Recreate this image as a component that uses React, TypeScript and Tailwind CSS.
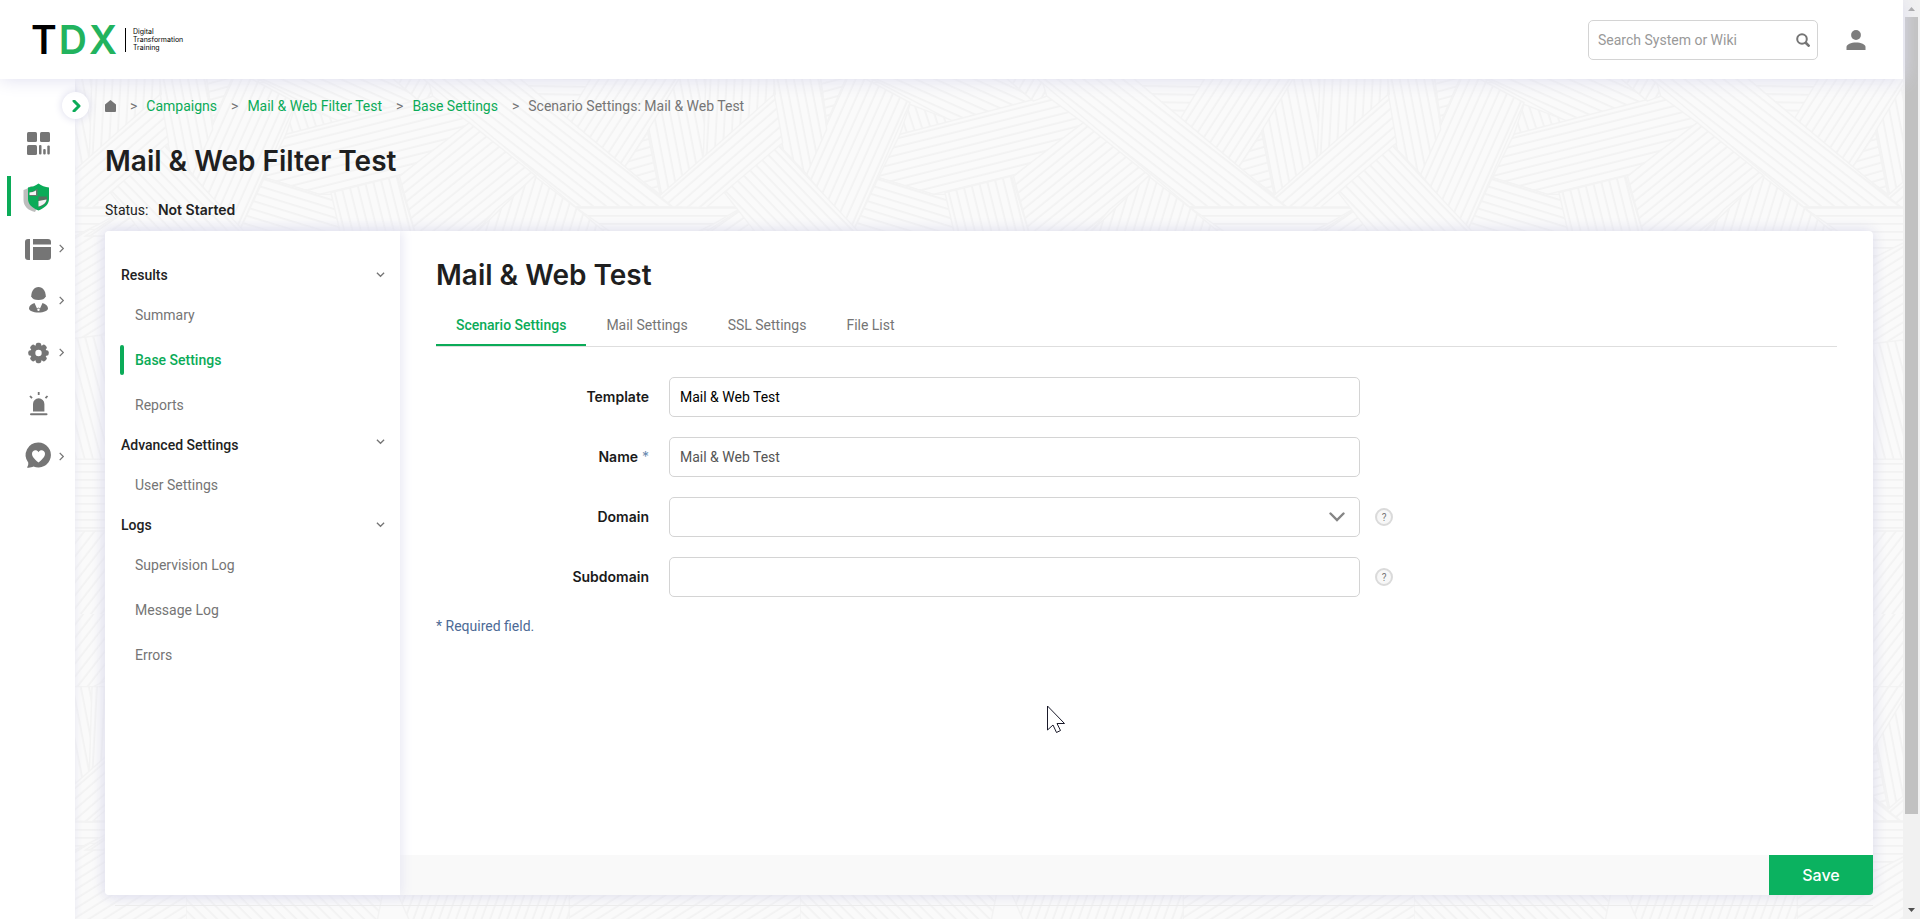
import React from "react";

type Region = { points: string; angle: number };

const REGIONS: Region[] = [
  { points: "0,460 620,460 560,760 0,760", angle: 45 },
  { points: "560,440 1200,440 1200,760 700,760", angle: 110 },
  { points: "1150,460 1900,460 1900,770 1150,830", angle: 148 },
  { points: "1150,830 1900,740 1900,1150 1150,1150", angle: 75 },
  { points: "0,1150 1842,1150 1842,1370 0,1370", angle: 0 },
  { points: "0,1365 1842,1365 1842,1800 0,1800", angle: 128 },
  { points: "0,-230 1842,-230 1842,-140 1500,20 0,20", angle: 128 },
  { points: "1168,393 1670,393 1590,440 1350,560 1270,465", angle: 0 },
  { points: "1675,393 1730,480 1540,480", angle: 145 },
  { points: "1615,350 1768,200 2020,470 1950,560 1780,560", angle: 46 },
  { points: "1757,-10 1902,-10 1922,160 1862,295 1772,200", angle: 79 },
  { points: "1902,-10 1987,-10 1922,140", angle: 165 },
  { points: "140,-10 180,0 330,80 160,465 20,295", angle: 114 },
  { points: "180,-10 600,-10 700,75 455,135", angle: 24 },
  { points: "330,85 460,135 300,175", angle: 72 },
  { points: "300,175 740,60 850,140 670,290 400,355 235,305", angle: 166 },
  { points: "600,-10 720,-10 740,60 700,75", angle: 120 },
  { points: "235,305 400,355 440,355 465,480 160,465", angle: 17 },
  { points: "435,350 635,300 690,480 465,480", angle: 76 },
  { points: "850,140 1050,300 930,400 860,480 690,480 640,300", angle: 141 },
  { points: "1045,300 1170,395 1270,480 860,480", angle: 107 },
  { points: "980,-10 1225,-10 1145,130", angle: 1 },
  { points: "1225,-10 1500,-10 1315,275 1140,130", angle: 123 },
  { points: "1385,165 1490,-10 1565,-10 1555,245 1422,360", angle: 79 },
  { points: "1315,275 1385,170 1422,355", angle: 164 },
  { points: "1560,-10 1762,-10 1768,55 1552,248", angle: 93 },
  { points: "690,-10 980,-10 1460,392 1168,392", angle: 38 },
  { points: "1420,360 1765,55 1790,200 1560,395 1460,392", angle: 139 },
];

const ANGLES = Array.from(new Set(REGIONS.map((r) => r.angle)));

function Backdrop() {
  return (
    <svg aria-hidden="true" className="absolute inset-0 h-full w-full">
      <defs>
        {ANGLES.map((a) => (
          <pattern
            key={a}
            id={`stripe-${a}`}
            width="24"
            height="24"
            patternUnits="userSpaceOnUse"
            patternTransform={`rotate(${a})`}
          >
            <rect width="24" height="24" fill="#fafafa" />
            <rect y="9" width="24" height="5" fill="#f2f2f2" />
          </pattern>
        ))}
        <pattern
          id="weave"
          width="614"
          height="614"
          patternUnits="userSpaceOnUse"
          patternTransform="translate(111 -79)"
        >
          <rect width="614" height="614" fill="#fafafa" />
          {[0, -1842].map((dx) => (
            <g key={dx} transform={`translate(0 76) scale(0.33333) translate(${dx} 0)`}>
              {REGIONS.map((r, i) => (
                <polygon
                  key={i}
                  points={r.points}
                  fill={`url(#stripe-${r.angle})`}
                  stroke="#f3f3f3"
                  strokeWidth="4"
                  visibility={dx === 0 || (i >= 9 && i <= 11) ? "visible" : "hidden"}
                />
              ))}
            </g>
          ))}
        </pattern>
      </defs>
      <rect width="100%" height="100%" fill="url(#weave)" />
    </svg>
  );
}

function Chevron({ className }: { className: string }) {
  return (
    <svg aria-hidden="true" viewBox="0 0 10 10" className={className} fill="none" stroke="currentColor" strokeWidth="1.4">
      <path d="M1 3l4 4 4-4" />
    </svg>
  );
}

function Logo() {
  return (
    <a href="#home" className="flex items-center font-['Inter',sans-serif]">
      <span className="flex gap-[2px] text-[39px] leading-10 font-semibold text-black">
        <span>T</span>
        <span className="text-[#22b35e]">D</span>
        <span className="text-[#22b35e]">X</span>
      </span>
      <span className="ml-2 border-l border-black pl-[7px] text-[7px] leading-[8px] text-black">
        Digital
        <br />
        Transformation
        <br />
        Training
      </span>
    </a>
  );
}

function Header() {
  return (
    <header className="relative z-20 flex h-[79px] shrink-0 items-center justify-between bg-white pr-[37px] pl-[31px] shadow-[0_0_18px_#dcdcee]">
      <Logo />
      <div className="flex items-center gap-[28px]">
        <form className="flex h-10 w-[230px] items-center rounded-[5px] border border-[#d4d4d4] bg-white pr-[7px] pl-[9px]">
          <input
            type="text"
            aria-label="Search System or Wiki"
            placeholder="Search System or Wiki"
            className="min-w-0 flex-1 bg-transparent text-sm outline-none placeholder:text-[#999]"
          />
          <button type="button" aria-label="Search">
            <svg viewBox="0 0 14 14" className="h-[14px] w-[14px]" fill="none" stroke="#757575" strokeWidth="2">
              <circle cx="6" cy="6" r="4.8" />
              <path d="M9.5 9.5l4 4" strokeWidth="2.6" />
            </svg>
          </button>
        </form>
        <button type="button" aria-label="Account">
          <svg viewBox="0 0 20 20" className="h-5 w-5" fill="#7d7d7d">
            <circle cx="10" cy="5" r="4.9" />
            <path d="M0.5 20v-3c0-2.8 4.5-4.6 9.500-4.600s9.500 1.800 9.500 4.600v3z" />
          </svg>
        </button>
      </div>
    </header>
  );
}

const ICONS: Record<string, React.ReactNode> = {
  Dashboard: (
    <g>
      <rect x="2" y="1" width="10" height="10" rx="1.500" />
      <rect x="15" y="1" width="10" height="10" rx="1.500" />
      <rect x="2" y="14" width="10" height="10" rx="1.500" />
      <rect x="14" y="14" width="2.500" height="9.500" rx="1" />
      <rect x="18.200" y="18" width="2.500" height="5.500" rx="1" />
      <rect x="22.300" y="14.500" width="2.500" height="9" rx="1" />
    </g>
  ),
  Campaigns: (
    <g>
      <path d="M-1.500 7Q2 6 6 3L14 6v15l-4 8c-7-1.500-11.500-6-11.500-12z" fill="#bdbdbd" />
      <path d="M3 4.500Q9 4 13.500 0.500Q18 4 24 4.500V16c0 5-4 9-10.500 11.500C7 25 3 21 3 16z" fill="#0bab58" />
      <path d="M4.500 9.500Q9 9 12.500 5.500V13H4.500z" fill="#67786d" />
      <path d="M4.500 9.500Q8 9.500 11 7.500L11 12L4.500 12z" fill="#f4f4f4" />
      <path d="M13.500 13.500H22V16c0 3.500-3 7-8.500 8.500z" fill="#57705f" />
      <path d="M13.500 18l8-1.500c-.3 3.500-3 5.500-8 7z" fill="#f4f4f4" />
    </g>
  ),
  Content: (
    <g>
      <path d="M3 4h2v21H3a3 3 0 0 1-3-3V7a3 3 0 0 1 3-3z" />
      <path d="M8 4h15a3 3 0 0 1 3 3v2.500H8z" />
      <path d="M8 12h18v10a3 3 0 0 1-3 3H8z" />
    </g>
  ),
  Users: (
    <g>
      <path d="M13.500 0c4.500 0 7 4 7.300 9.200-1 2.800-3.500 3.800-7.300 3.800s-6.300-1-7.300-3.800C6.500 4 9 0 13.500 0z" />
      <path d="M9.500 16l2.500 5.500 1.500-1 1.500 1 2.500-5.500c3.500 1 5.500 3 5.500 5.500 0 2.200-4 4-9.500 4s-9.500-1.800-9.500-4c0-2.500 2-4.500 5.500-5.500z" />
      <circle cx="13.500" cy="22.800" r="1.200" fill="#fff" />
    </g>
  ),
  Settings: (
    <g>
      {[0, 45, 90, 135].map((a) => (
        <rect key={a} x="10.800" y="3.800" width="5.400" height="20.400" rx="2" transform={`rotate(${a} 13.500 14)`} />
      ))}
      <circle cx="13.500" cy="14" r="8" />
      <circle cx="13.500" cy="14" r="3.200" fill="#fff" />
    </g>
  ),
  Alerts: (
    <g>
      <path d="M8 20.500v-7.500a5.700 5.700 0 0 1 11.400 0v7.500z" />
      <rect x="5" y="22.300" width="17.500" height="2" rx="1" />
      <path d="M13.700 1v3M5 5l2 2.200M22.500 5l-2 2.200" stroke="#757575" strokeWidth="1.800" />
    </g>
  ),
  Feedback: (
    <g transform="translate(0 -1)">
      <path d="M13.500 0.500a12.500 12.500 0 1 1-5 24c-2 1-4.500 1.500-6.500 1 1-1.500 1.500-3 1.200-5A12.500 12.500 0 0 1 13.500 0.500z" />
      <path d="M13.500 20.500C9 17 7 14.500 7 11.800c0-3.800 4.800-4.800 6.500-1.500 1.700-3.300 6.500-2.300 6.500 1.500 0 2.700-2 5.200-6.500 8.700z" fill="#fff" />
    </g>
  ),
};

const NAV = [
  { name: "Dashboard", more: false },
  { name: "Campaigns", more: false },
  { name: "Content", more: true },
  { name: "Users", more: true },
  { name: "Settings", more: true },
  { name: "Alerts", more: false },
  { name: "Feedback", more: true },
];

function Sidebar() {
  return (
    <aside className="relative z-10 w-[75px] shrink-0 bg-white pt-[39px] shadow-[0_0_8px_#e6e6f2]">
      <button
        type="button"
        aria-label="Expand menu"
        className="absolute top-[13px] -right-[14px] flex h-[27px] w-[27px] items-center justify-center rounded-full bg-white text-[#0bab58] shadow-[0_0_8px_#d8d8ea]"
      >
        <svg viewBox="0 0 12 12" className="ml-[2px] h-3 w-3" fill="none" stroke="currentColor" strokeWidth="3">
          <path d="M3 1l5 5-5 5" strokeLinecap="round" strokeLinejoin="round" />
        </svg>
      </button>
      <nav>
        {NAV.map((n) => (
          <a
            key={n.name}
            href={`#${n.name.toLowerCase()}`}
            aria-label={n.name}
            className="flex h-[52px] items-center pl-[7px] text-[#757575]"
          >
            <span className={n.name === "Campaigns" ? "h-10 w-1 bg-[#0bab58]" : "h-10 w-1"} />
            <svg viewBox="0 0 27 27" className="ml-[14px] h-[27px] w-[27px] overflow-visible" fill="currentColor">
              {ICONS[n.name]}
            </svg>
            {n.more && <Chevron className="ml-[5px] h-[9px] w-[9px] -rotate-90" />}
          </a>
        ))}
      </nav>
    </aside>
  );
}

const CRUMBS = ["Campaigns", "Mail & Web Filter Test", "Base Settings"];

function Breadcrumbs() {
  return (
    <nav aria-label="Breadcrumb" className="flex h-5 items-center text-sm text-[#757575]">
      <a href="#home" aria-label="Home">
        <svg viewBox="0 0 11 12" className="h-3 w-[11px]" fill="currentColor">
          <path d="M5.500 0L11 4.500V11a1 1 0 0 1-1 1H1a1 1 0 0 1-1-1V4.500z" />
        </svg>
      </a>
      {CRUMBS.map((c) => (
        <React.Fragment key={c}>
          <span className="mr-[9px] ml-[14px]">&gt;</span>
          <a href="#crumb" className="text-[#0bab58]">{c}</a>
        </React.Fragment>
      ))}
      <span className="mr-[9px] ml-[14px]">&gt;</span>
      <span>Scenario Settings: Mail &amp; Web Test</span>
    </nav>
  );
}

const MENU = [
  { title: "Results", items: ["Summary", "Base Settings", "Reports"] },
  { title: "Advanced Settings", items: ["User Settings"] },
  { title: "Logs", items: ["Supervision Log", "Message Log", "Errors"] },
];

function SideMenu() {
  return (
    <nav aria-label="Campaign" className="relative z-10 w-[295px] shrink-0 rounded-l bg-white pt-[26px] text-sm shadow-[2px_0_12px_#e6e6f2]">
      {MENU.map((g) => (
        <section key={g.title}>
          <button type="button" className="flex h-[35px] w-full items-center justify-between pr-[15px] pl-4 font-medium text-[#222]">
            {g.title}
            <Chevron className={g.title === "Advanced Settings" ? "mb-[6px] h-[9px] w-[9px] text-[#757575]" : "h-[9px] w-[9px] text-[#757575]"} />
          </button>
          {g.items.map((i) => (
            <a
              key={i}
              href="#item"
              className={
                i === "Base Settings"
                  ? "flex h-[45px] items-center pl-[15px] font-medium text-[#0bab58]"
                  : "flex h-[45px] items-center pl-[15px] text-[#757575]"
              }
            >
              <span className={i === "Base Settings" ? "mr-[11px] h-[30px] w-1 rounded-sm bg-[#0bab58]" : "mr-[11px] w-1"} />
              {i}
            </a>
          ))}
        </section>
      ))}
    </nav>
  );
}

const TABS = ["Scenario Settings", "Mail Settings", "SSL Settings", "File List"];

const CONTROL = "h-10 w-full appearance-none rounded-[5px] border border-[#d4d4d4] bg-white px-[10px] text-sm outline-none";

function Row({ id, label, required, help, children }: { id: string; label: string; required?: boolean; help?: boolean; children: React.ReactNode }) {
  return (
    <div className="grid grid-cols-[213px_minmax(0,691px)_auto] items-center">
      <label htmlFor={id} className="text-right font-['Inter',sans-serif] text-sm font-semibold text-[#1a1a1a]">
        {label}
        {required && <span className="font-normal text-[#6a8ab0]"> *</span>}
      </label>
      <div className="relative ml-5 -mr-5">{children}</div>
      {help && (
        <button
          type="button"
          aria-label={`Help for ${label}`}
          className="ml-[35px] flex h-[18px] w-[18px] items-center justify-center rounded-full border-2 border-[#dadada] bg-[#f7f7f7] text-[10px] text-[#777]"
        >
          ?
        </button>
      )}
    </div>
  );
}

function ScenarioForm() {
  return (
    <form className="flex min-w-0 flex-1 flex-col">
      <div className="flex-1 px-9 pt-6">
        <h2 className="font-['Inter',sans-serif] text-[28px] leading-10 font-semibold text-[#1f1f1f]">Mail &amp; Web Test</h2>
        <div role="tablist" className="mt-[10px] flex border-b border-[#dedede] text-sm">
          {TABS.map((t, i) => (
            <button
              key={t}
              type="button"
              role="tab"
              aria-selected={i === 0}
              className={
                i === 0
                  ? "h-[41px] border-b-2 border-[#0bab58] px-5 font-medium text-[#0bab58]"
                  : "h-[41px] border-b-2 border-transparent px-5 text-[#757575]"
              }
            >
              {t}
            </button>
          ))}
        </div>
        <div className="mt-[30px] flex flex-col gap-5">
          <Row id="template" label="Template">
            <input id="template" defaultValue="Mail & Web Test" className={`${CONTROL} text-black`} />
          </Row>
          <Row id="name" label="Name" required>
            <input id="name" defaultValue="Mail & Web Test" className={`${CONTROL} text-[#555]`} />
          </Row>
          <Row id="domain" label="Domain" help>
            <select id="domain" className={CONTROL} defaultValue="">
              <option value="" />
            </select>
            <svg viewBox="0 0 16 10" className="pointer-events-none absolute top-[15px] right-[15px] h-[10px] w-4" fill="none" stroke="#858585" strokeWidth="2.4">
              <path d="M1.500 1.500L8 8l6.500-6.500" strokeLinecap="round" />
            </svg>
          </Row>
          <Row id="subdomain" label="Subdomain" help>
            <input id="subdomain" className={CONTROL} />
          </Row>
        </div>
        <p className="mt-[19px] text-sm leading-5 text-[#4c6a96]">* Required field.</p>
      </div>
      <div className="flex h-10 justify-end rounded-br bg-[#f9f9f9]">
        <button type="submit" className="w-[104px] rounded-br bg-[#0bb260] font-['Inter',sans-serif] text-base font-medium text-white">
          Save
        </button>
      </div>
    </form>
  );
}

function Scrollbar() {
  return (
    <div aria-hidden="true" className="flex w-[17px] shrink-0 flex-col items-center bg-[#f1f1f1]">
      <svg viewBox="0 0 17 17" className="h-[17px] w-[17px]" fill="#a3a3a3">
        <path d="M5 11h7L8.500 7z" />
      </svg>
      <div className="flex w-full flex-1 flex-col items-center">
        <div className="w-[13px] basis-[90%] bg-[#c1c1c1]" />
      </div>
      <svg viewBox="0 0 17 17" className="h-[17px] w-[17px]" fill="#505050">
        <path d="M5 6h7L8.500 10z" />
      </svg>
    </div>
  );
}

export default function App() {
  return (
    <div className="relative flex min-h-screen font-['Roboto',sans-serif] text-[#222]">
      <div className="flex min-w-0 flex-1 flex-col">
        <Header />
        <div className="flex flex-1">
          <Sidebar />
          <main className="relative flex min-w-0 flex-1">
            <Backdrop />
            <div className="relative flex min-w-0 flex-1 flex-col px-[30px] pt-[17px]">
              <Breadcrumbs />
              <h1 className="mt-[25px] font-['Inter',sans-serif] text-[28px] leading-10 font-semibold text-[#1f1f1f]">Mail &amp; Web Filter Test</h1>
              <p className="mt-[19px] text-sm leading-5">
                Status: <strong className="ml-[6px] font-['Inter',sans-serif] font-semibold">Not Started</strong>
              </p>
              <div className="mt-[11px] flex flex-1 rounded bg-white shadow-[0_0_14px_#d8d8ea]">
                <SideMenu />
                <ScenarioForm />
              </div>
              <hr className="mt-[10px] mb-[13px] ml-[10px] border-[#ececec]" />
            </div>
          </main>
        </div>
      </div>
      <Scrollbar />
      <svg aria-hidden="true" viewBox="0 0 19 28" className="pointer-events-none absolute top-[705px] left-[1047px] z-30 h-7 w-[19px]" fill="#fff" stroke="#1a1a2a">
        <path d="M.5 1v24l5.500-5 3.500 7.500 4-2-3.500-7h7.500z" />
      </svg>
    </div>
  );
}
